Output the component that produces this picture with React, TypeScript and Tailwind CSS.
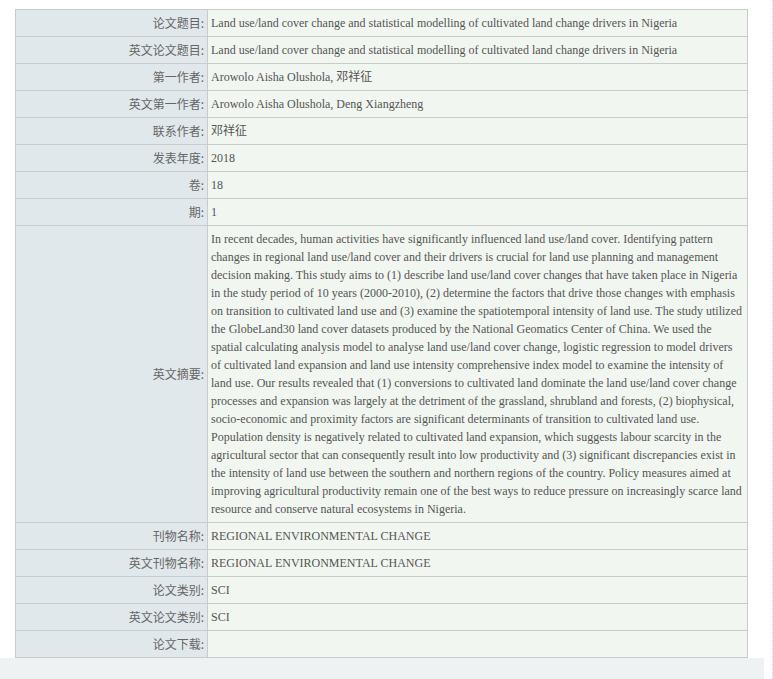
import React from "react";

const abstract =
  "In recent decades, human activities have significantly influenced land use/land cover. Identifying pattern changes in regional land use/land cover and their drivers is crucial for land use planning and management decision making. This study aims to (1) describe land use/land cover changes that have taken place in Nigeria in the study period of 10 years (2000-2010), (2) determine the factors that drive those changes with emphasis on transition to cultivated land use and (3) examine the spatiotemporal intensity of land use. The study utilized the GlobeLand30 land cover datasets produced by the National Geomatics Center of China. We used the spatial calculating analysis model to analyse land use/land cover change, logistic regression to model drivers of cultivated land expansion and land use intensity comprehensive index model to examine the intensity of land use. Our results revealed that (1) conversions to cultivated land dominate the land use/land cover change processes and expansion was largely at the detriment of the grassland, shrubland and forests, (2) biophysical, socio-economic and proximity factors are significant determinants of transition to cultivated land use. Population density is negatively related to cultivated land expansion, which suggests labour scarcity in the agricultural sector that can consequently result into low productivity and (3) significant discrepancies exist in the intensity of land use between the southern and northern regions of the country. Policy measures aimed at improving agricultural productivity remain one of the best ways to reduce pressure on increasingly scarce land resource and conserve natural ecosystems in Nigeria.";

const rows: [string, string][] = [
  ["论文题目:", "Land use/land cover change and statistical modelling of cultivated land change drivers in Nigeria"],
  ["英文论文题目:", "Land use/land cover change and statistical modelling of cultivated land change drivers in Nigeria"],
  ["第一作者:", "Arowolo Aisha Olushola, 邓祥征"],
  ["英文第一作者:", "Arowolo Aisha Olushola, Deng Xiangzheng"],
  ["联系作者:", "邓祥征"],
  ["发表年度:", "2018"],
  ["卷:", "18"],
  ["期:", "1"],
  ["英文摘要:", abstract],
  ["刊物名称:", "REGIONAL ENVIRONMENTAL CHANGE"],
  ["英文刊物名称:", "REGIONAL ENVIRONMENTAL CHANGE"],
  ["论文类别:", "SCI"],
  ["英文论文类别:", "SCI"],
  ["论文下载:", ""],
];

export default function App() {
  return (
    <div className="w-[773px] h-[679px] bg-white overflow-hidden">
      <div className="w-[773px] h-[679px] border-r border-dotted border-[#d6d6c8]">
        <div className="pt-[9px] pl-[15px]">
          <table className="w-[733px] table-fixed border-collapse">
            <colgroup>
              <col className="w-[192px]" />
              <col />
            </colgroup>
            <tbody>
              {rows.map(([label, value], i) => (
                <tr key={i}>
                  <td
                    className="border border-[#c9cccb] bg-[#e1e8eb] text-right align-middle pr-[3px] py-[4px] text-[12px] leading-[18px] text-[#666]"
                    style={{ fontFamily: '"Noto Sans CJK SC", "Noto Sans", sans-serif' }}
                  >
                    {label}
                  </td>
                  <td
                    className="border border-[#c9cccb] bg-[#f1f6f0] text-left align-middle pl-[3px] pr-[4px] py-[4px] text-[12px] leading-[18px] text-[#555] h-[27px]"
                    style={{ fontFamily: '"Liberation Serif", "Noto Sans CJK SC", serif' }}
                  >
                    {value}
                  </td>
                </tr>
              ))}
            </tbody>
          </table>
        </div>
        <div className="h-[22px] w-[764px] bg-[#eef2f3]" />
      </div>
    </div>
  );
}
